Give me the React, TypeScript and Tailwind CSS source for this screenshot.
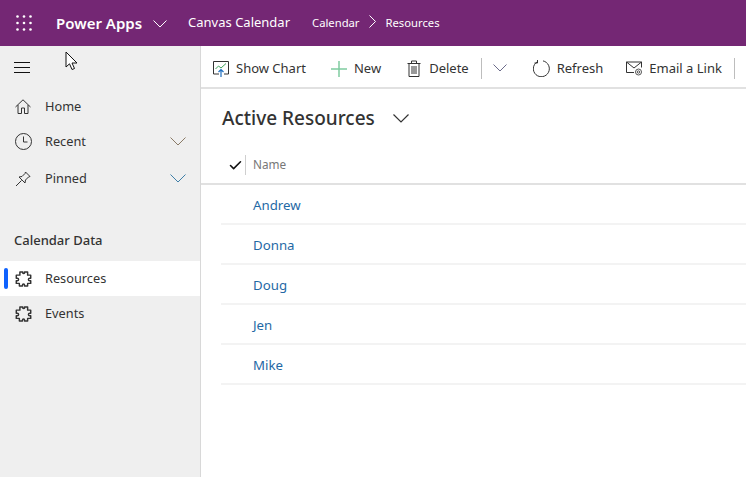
import { Check } from 'lucide-react';
import type { ReactNode } from 'react';

const font = 'font-["Noto_Sans",sans-serif]';

function Chevron({ width, color, strokeWidth = 1 }: { width: number; color: string; strokeWidth?: number }) {
  return (
    <svg className="shrink-0" width={width} height={width / 2 + 1} viewBox={`0 0 ${width} ${width / 2 + 1}`} fill="none" stroke={color} strokeWidth={strokeWidth}>
      <path d={`M.5 .5 L${width / 2} ${width / 2} L${width - 0.5} .5`} />
    </svg>
  );
}

function Puzzle() {
  return (
    <svg width="17" height="16" viewBox="0 0 16 15.500" fill="none" stroke="#333" strokeWidth="1.400" strokeLinejoin="round">
      <path d="M4.500 1H7.300V2A1 1 0 0 0 9 2V1H12V4H15V7H14A1.200 1.200 0 0 0 14 9.500H15V12H12V14.500H9V13.500A1 1 0 0 0 7 13.500V14.500H4V12H1V9.500H2A1.200 1.200 0 0 0 2 7H1V4H4.500Z" />
    </svg>
  );
}

function HomeIcon() {
  return (
    <svg width="16" height="15" viewBox="0 0 16 15" fill="none" stroke="#333" strokeWidth="1">
      <path d="M.5 8 8 .8 15.500 8" />
      <path d="M3 6v8.500h3.500V9h3v5.500H13V6" />
    </svg>
  );
}

function ClockIcon() {
  return (
    <svg width="17" height="17" viewBox="0 0 17 17" fill="none" stroke="#333" strokeWidth="1">
      <circle cx="8.500" cy="8.500" r="8" />
      <path d="M8.500 3.500v5.500h4" />
    </svg>
  );
}

function PinIcon() {
  return (
    <svg width="16" height="16" viewBox="0 0 16 16" fill="none" stroke="#333" strokeWidth="1" strokeLinejoin="round">
      <path d="M10.500 1 15 5.500 13.500 6 10.500 9 10 12 4 6 7 5.500 10 2.500z" />
      <path d="M6.500 9.500 1 15" />
    </svg>
  );
}

function ChartIcon() {
  return (
    <svg width="16" height="16" viewBox="0 0 16 16" fill="none">
      <path d="M6 13H.5V.5h15V13H11" stroke="#333" strokeWidth="1" />
      <path d="M2.500 8l3-3 2.500 2 5-4.500" stroke="#3fa35c" strokeWidth="1" />
      <path d="M8 16V8.500M5.500 11 8 8.500l2.500 2.500" stroke="#1f6fc0" strokeWidth="1.200" />
    </svg>
  );
}

function PlusIcon() {
  return (
    <svg width="16" height="16" viewBox="0 0 16 16" stroke="#7fcba0" strokeWidth="1.500">
      <path d="M8 0v16M0 8h16" />
    </svg>
  );
}

function TrashIcon() {
  return (
    <svg width="14" height="17" viewBox="0 0 14 17" fill="none" stroke="#333" strokeWidth="1">
      <path d="M.5 3.500h13M2 3.500v13h10v-13M4.500 3.500V1h5v2.500" />
      <path d="M5 6v8M7 6v8M9 6v8" />
    </svg>
  );
}

function RefreshIcon() {
  return (
    <svg width="17" height="17" viewBox="0 0 17 17" fill="none" stroke="#333" strokeWidth="1">
      <path d="M10 .9A8 8 0 1 1 4 2" />
      <path d="M4.500 0v3H1.500" />
    </svg>
  );
}

function MailIcon() {
  return (
    <svg width="16" height="15" viewBox="0 0 16 15" fill="none" stroke="#333" strokeWidth="1">
      <path d="M8 11.500H.5V1h15v5.500" />
      <path d="M.5 1 8 7l7.500-6" />
      <circle cx="12.500" cy="11" r="3" stroke="#555" />
      <circle cx="12.500" cy="11" r="1.200" stroke="#555" />
    </svg>
  );
}

function Cursor() {
  return (
    <svg className="absolute left-[65px] top-[51px]" width="14" height="20" viewBox="0 0 14 20">
      <path d="M1 1v15l3.500-3.200 2.500 5.700 2.500-1-2.500-5.500H12z" fill="#fff" stroke="#111" strokeWidth="1" strokeLinejoin="round" />
    </svg>
  );
}

function NavItem({ icon, label, chevron, active }: { icon: ReactNode; label: string; chevron?: string; active?: boolean }) {
  return (
    <div className={`relative flex h-[35px] items-center pl-[14px] pr-[14px] ${active ? 'bg-white' : ''}`}>
      {active && <div className="absolute left-1 top-[7px] h-[21px] w-1 rounded-sm bg-[#0f62fe]" />}
      <span className="flex w-[18px] justify-center">{icon}</span>
      <span className="ml-[13px] flex-1 text-[12.750px] text-[#333]">{label}</span>
      {chevron && <Chevron width={16} color={chevron} />}
    </div>
  );
}

function ToolButton({ icon, label, className }: { icon: ReactNode; label: string; className: string }) {
  return (
    <div className={`flex items-center gap-[7px] whitespace-nowrap ${className}`}>
      {icon}
      <span className="text-[13px] text-[#333]">{label}</span>
    </div>
  );
}

const people = ['Andrew', 'Donna', 'Doug', 'Jen', 'Mike'];

export default function App() {
  return (
    <div className={`relative flex h-[477px] w-[746px] flex-col overflow-hidden bg-white ${font}`}>
      <header className="flex h-[46px] shrink-0 items-center bg-[#742774] text-white">
        <svg className="ml-4 shrink-0" width="16" height="16" viewBox="0 0 16 16" fill="#fff">
          <circle cx="1.500" cy="1.500" r="1.300" /><circle cx="8" cy="1.500" r="1.300" /><circle cx="14.500" cy="1.500" r="1.300" />
          <circle cx="1.500" cy="8" r="1.300" /><circle cx="8" cy="8" r="1.300" /><circle cx="14.500" cy="8" r="1.300" />
          <circle cx="1.500" cy="14.500" r="1.300" /><circle cx="8" cy="14.500" r="1.300" /><circle cx="14.500" cy="14.500" r="1.300" />
        </svg>
        <span className="ml-6 text-[15px] font-semibold">Power Apps</span>
        <span className="ml-[11px] mt-[2px]"><Chevron width={14} color="#fff" /></span>
        <span className="ml-[21px] text-[13px]">Canvas Calendar</span>
        <span className="ml-[22px] text-[11.250px]">Calendar</span>
        <svg className="ml-[9px] -mt-1 shrink-0" width="7" height="13" viewBox="0 0 7 13" fill="none" stroke="#fff" strokeWidth="1">
          <path d="M.5 .5 6.500 6.500 .5 12.500" />
        </svg>
        <span className="ml-[10px] text-[11.250px]">Resources</span>
      </header>
      <div className="flex flex-1">
        <aside className="flex w-[201px] shrink-0 flex-col border-r border-[#d8d8d8] bg-[#efefef]">
          <div className="flex h-[43px] items-center pl-[14px]">
            <svg width="16" height="11" viewBox="0 0 16 11" stroke="#111" strokeWidth="1"><path d="M0 .5h16M0 5.500h16M0 10.500h16" /></svg>
          </div>
          <NavItem icon={<HomeIcon />} label="Home" />
          <NavItem icon={<ClockIcon />} label="Recent" chevron="#8a7a66" />
          <div className="mt-[2px]">
            <NavItem icon={<PinIcon />} label="Pinned" chevron="#3f7fa8" />
          </div>
          <div className="mb-[10.500px] mt-[35px] pl-[14px] text-[13px] font-medium text-[#333]">Calendar Data</div>
          <NavItem icon={<Puzzle />} label="Resources" active />
          <NavItem icon={<Puzzle />} label="Events" />
        </aside>
        <main className="flex min-w-0 flex-1 flex-col">
          <div className="flex h-[43px] shrink-0 items-center border-b-2 border-[#e1e1e1] pl-3 pt-1">
            <ToolButton icon={<ChartIcon />} label="Show Chart" className="" />
            <ToolButton icon={<PlusIcon />} label="New" className="ml-[25px]" />
            <ToolButton icon={<TrashIcon />} label="Delete" className="ml-[26px] gap-[8px]" />
            <div className="ml-[12px] h-[21px] w-px bg-[#bdbdbd]" />
            <span className="ml-[11px] -mt-[2px]"><Chevron width={14} color="#6b6b8a" /></span>
            <ToolButton icon={<RefreshIcon />} label="Refresh" className="ml-[26px]" />
            <ToolButton icon={<MailIcon />} label="Email a Link" className="ml-[23px]" />
            <div className="ml-[12px] h-[21px] w-px bg-[#bdbdbd]" />
          </div>
          <div className="flex h-[59px] shrink-0 items-center pl-[21px]">
            <span className="text-[19px] font-medium text-[#333]">Active Resources</span>
            <span className="ml-[18px]"><Chevron width={16} color="#333" strokeWidth={1.200} /></span>
          </div>
          <div className="flex h-[37px] shrink-0 items-center border-b-2 border-[#e1e1e1] pb-[1px] pl-[27px]">
            <Check size={15} strokeWidth={2.500} className="text-[#111]" />
            <div className="ml-[2px] h-[20px] w-px bg-[#cfcfcf]" />
            <span className="ml-[7px] text-[11.750px] text-[#777]">Name</span>
          </div>
          <div className="ml-5">
            {people.map((name) => (
              <div key={name} className="flex h-10 items-center border-b-2 border-[#f3f3f3] pl-[32px] pt-[4px] text-[13.250px] text-[#1f69a5]">
                {name}
              </div>
            ))}
          </div>
        </main>
      </div>
      <Cursor />
    </div>
  );
}
